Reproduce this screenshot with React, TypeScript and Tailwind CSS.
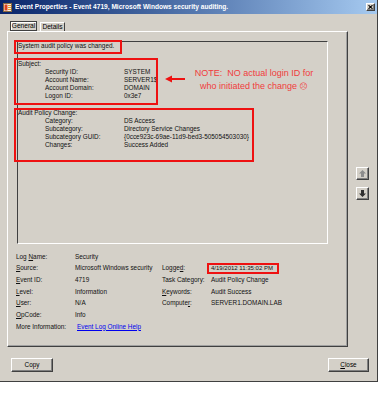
import React from "react";

const raised =
  "border border-t-white border-l-white border-b-[#404040] border-r-[#404040] shadow-[inset_-1px_-1px_0_#808080]";

function Row({ label, value }: { label: string; value: string }) {
  return (
    <div className="flex">
      <div className="w-[106px] pl-[27px] shrink-0">{label}</div>
      <div className="whitespace-nowrap">{value}</div>
    </div>
  );
}

function U({ children }: { children: React.ReactNode }) {
  return <span className="underline underline-offset-[1px]">{children}</span>;
}

export default function App() {
  return (
    <div className="w-[379px] h-[395px] bg-white font-['Liberation_Sans',Arial,sans-serif] text-black">
      <div className="w-[378px] h-[382px] bg-[#d4d0c8] border-r border-b border-[#404040] flex flex-col">
        {/* Title bar */}
        <div className="h-[14px] flex items-center bg-linear-to-r from-[#0a246a] to-[#a6caf0] pl-[3px] pr-[2px] shrink-0">
          <svg width="9" height="9" viewBox="0 0 9 9" className="shrink-0">
            <rect x="0.5" y="0.5" width="8" height="8" fill="#f4efe4" stroke="#8a6a40" strokeWidth="1" />
            <rect x="1.5" y="1.5" width="3" height="6" fill="#e0401c" />
            <rect x="5" y="2" width="3" height="1" fill="#e89a2a" />
            <rect x="5" y="4" width="3" height="1" fill="#e89a2a" />
            <rect x="5" y="6" width="3" height="1" fill="#e89a2a" />
          </svg>
          <span className="ml-[3px] text-white font-bold text-[6.6px] leading-none whitespace-nowrap">
            Event Properties - Event 4719, Microsoft Windows security auditing.
          </span>
          <div className={`ml-auto w-[9px] h-[8px] bg-[#d4d0c8] ${raised} flex items-center justify-center`}>
            <svg width="5" height="4" viewBox="0 0 5 4">
              <path d="M0.5 0.2 L4.5 3.8 M4.5 0.2 L0.5 3.8" stroke="black" strokeWidth="1.1" />
            </svg>
          </div>
        </div>

        {/* Main */}
        <div className="flex">
          <div className="ml-[7px] w-[341px] flex flex-col">
            {/* Tabs */}
            <div className="mt-[7px] h-[10px] flex items-end pl-[3px] text-[6.6px] leading-none">
              <div className="h-[10px] w-[27px] border border-[#404040] shadow-[inset_1px_1px_0_white] flex items-center justify-center">
                General
              </div>
              <div className="ml-[3px] h-[9px] w-[25px] border-t border-l border-white border-r border-r-[#404040] flex items-center justify-center">
                Details
              </div>
            </div>
            {/* Panel */}
            <div className="h-[316px] border border-t-white border-l-white border-r-[#404040] border-b-[#404040] shadow-[inset_-1px_-1px_0_#a0a0a0] pl-[9px] pt-[9px] flex flex-col">
              {/* Description box */}
              <div className="relative w-[311px] h-[203px] shrink-0 border border-t-[#404040] border-l-[#404040] border-b-white border-r-white text-[6.4px] leading-[8px] text-[#111]">
                <div className="whitespace-nowrap">System audit policy was changed.</div>
                <div className="mt-[10px]">Subject:</div>
                <Row label="Security ID:" value="SYSTEM" />
                <Row label="Account Name:" value="SERVER1$" />
                <Row label="Account Domain:" value="DOMAIN" />
                <Row label="Logon ID:" value="0x3e7" />
                <div className="mt-[9px]">Audit Policy Change:</div>
                <Row label="Category:" value="DS Access" />
                <Row label="Subcategory:" value="Directory Service Changes" />
                <Row label="Subcategory GUID:" value="{0cce923c-69ae-11d9-bed3-505054503030}" />
                <Row label="Changes:" value="Success Added" />

                {/* Annotations */}
                <div className="absolute left-[-4px] top-[-2px] w-[108px] h-[14px] border-2 border-[#ee1111]" />
                <div className="absolute left-[-4px] top-[16px] w-[144px] h-[47px] border-2 border-[#ee1111]" />
                <div className="absolute left-[-4px] top-[66px] w-[240px] h-[54px] border-2 border-[#ee1111]" />
                <svg className="absolute left-[147px] top-[33px]" width="20" height="8" viewBox="0 0 20 8">
                  <rect x="6" y="3" width="14" height="2" fill="#ee1111" />
                  <polygon points="0,4 7,0.5 7,7.5" fill="#ee1111" />
                </svg>
                <div className="absolute left-[168px] top-[25px] w-[136px] text-center text-[9px] leading-[13px] text-[#f03c3c] whitespace-nowrap">
                  <div>NOTE:&nbsp; NO actual login ID for</div>
                  <div>
                    who initiated the change <span className="font-['DejaVu_Sans'] text-[8px]">☹</span>
                  </div>
                </div>
              </div>

              {/* Fields */}
              <div className="mt-[7px] -ml-[1px] grid grid-cols-[59px_87px_49px_auto] auto-rows-[11.67px] items-center text-[6.4px] leading-none whitespace-nowrap text-[#111]">
                <div>Log <U>N</U>ame:</div>
                <div>Security</div>
                <div></div>
                <div></div>

                <div><U>S</U>ource:</div>
                <div>Microsoft Windows security</div>
                <div>Logge<U>d</U>:</div>
                <div>
                  <div className="-ml-[4px] w-[72px] h-[11px] border-2 border-[#ee1111] pl-[2px] flex items-center text-[6px]">
                    4/19/2012 11:35:02 PM
                  </div>
                </div>

                <div><U>E</U>vent ID:</div>
                <div>4719</div>
                <div>Task Category:</div>
                <div>Audit Policy Change</div>

                <div><U>L</U>evel:</div>
                <div>Information</div>
                <div><U>K</U>eywords:</div>
                <div>Audit Success</div>

                <div><U>U</U>ser:</div>
                <div>N/A</div>
                <div>Compute<U>r</U>:</div>
                <div>SERVER1.DOMAIN.LAB</div>

                <div><U>O</U>pCode:</div>
                <div>Info</div>
                <div></div>
                <div></div>

                <div>More Information:</div>
                <div className="col-span-3 pl-[2px] text-[#0000ee] underline underline-offset-[1px]">Event Log Online Help</div>
              </div>
            </div>
          </div>

          {/* Navigation arrows */}
          <div className="ml-[8px] mt-[153px] flex flex-col gap-[7px]">
            <div className={`w-[13px] h-[13px] bg-[#d4d0c8] ${raised} flex items-center justify-center`}>
              <svg width="7" height="7" viewBox="0 0 7 7">
                <polygon points="3.5,0 7,3.5 5,3.5 5,7 2,7 2,3.5 0,3.5" fill="#8c8c8c" />
              </svg>
            </div>
            <div className={`w-[13px] h-[13px] bg-[#d4d0c8] ${raised} flex items-center justify-center`}>
              <svg width="7" height="7" viewBox="0 0 7 7">
                <polygon points="3.5,7 7,3.5 5,3.5 5,0 2,0 2,3.5 0,3.5" fill="#303030" />
              </svg>
            </div>
          </div>
        </div>

        {/* Buttons */}
        <div className="mt-[11px] flex justify-between pl-[11px] pr-[8px] text-[6.4px] leading-none">
          <div className={`w-[42px] h-[14px] ${raised} flex items-center justify-center`}>Copy</div>
          <div className={`w-[41px] h-[14px] ${raised} flex items-center justify-center`}>
            <span><U>C</U>lose</span>
          </div>
        </div>
      </div>
    </div>
  );
}
